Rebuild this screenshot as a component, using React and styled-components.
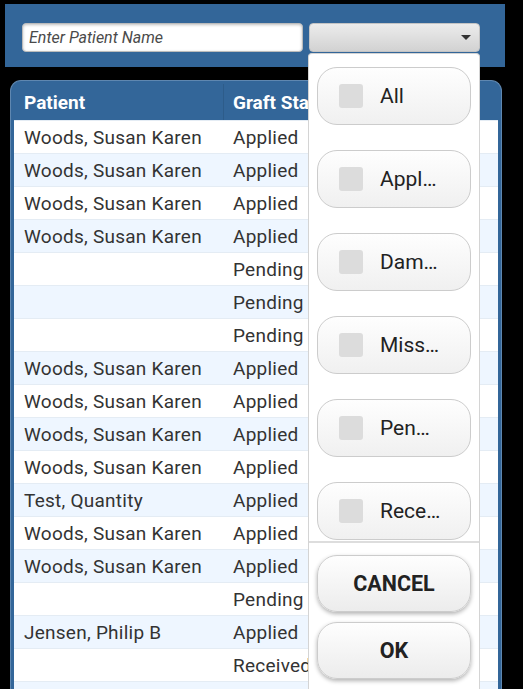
import React from 'react'
import styled, { createGlobalStyle } from 'styled-components'

const Global = createGlobalStyle`
  html, body { margin:0; padding:0; background:#000; }
  body { font-family: Roboto, "Noto Sans", sans-serif; overflow:hidden; height:689px; }
`

const Page = styled.div`position:relative; height:689px; overflow:hidden;`
const TopBar = styled.div`
  margin:4px 18px 0 5px; height:63px; background:#336699;
  display:flex; align-items:flex-start; gap:6px; padding:19px 0 0 17px; box-sizing:border-box;
`
const SearchInput = styled.input`
  width:281px; height:29px; box-sizing:border-box; border:1px solid #bbb; border-radius:4px;
  background:#fff; padding:0 6px; font-family:Roboto, sans-serif; font-size:16px; font-style:italic;
  box-shadow: inset 0 1px 3px rgba(0,0,0,0.25);
  &::placeholder { color:#4a4a4a; }
`
const Select = styled.div`
  width:171px; height:29px; box-sizing:border-box; border:1px solid #c4c4c4; border-radius:4px;
  background:linear-gradient(#ececec, #d2d2d2); display:flex; align-items:center; justify-content:flex-end;
  padding-right:8px;
`
const Arrow = styled.span`
  width:0; height:0; border-left:5px solid transparent; border-right:5px solid transparent;
  border-top:5px solid #333;
`
const TableWrap = styled.div`
  margin:13px 21px 0 10px; background:#336699; border-radius:11px 11px 0 0;
  padding:3px 3px 0 3px; border:1px solid #5f87b0; border-bottom:none;
`
const HeadRow = styled.div`display:grid; grid-template-columns:210px 110px 1fr; height:36px;`
const HeadCell = styled.div`
  color:#fff; font-weight:bold; font-size:19px; display:flex; align-items:center;
  padding-left:${p => p.$pad}px; border-right:${p => (p.$line ? '1px solid #2d5c8a' : 'none')};
  white-space:nowrap;
`
const Row = styled.div`
  display:grid; grid-template-columns:210px 110px 1fr; height:33px;
  background:${p => (p.$alt ? '#eef6ff' : '#fff')}; border-top:1px solid #e4ecf4; box-sizing:border-box;
`
const Cell = styled.div`
  color:#333; font-size:19px; letter-spacing:0.25px; display:flex; align-items:center;
  padding-left:${p => p.$pad}px; white-space:nowrap;
`
const Panel = styled.div`
  position:absolute; left:308px; top:53px; width:172px; bottom:0; box-sizing:border-box;
  background:#fff; border:1px solid #d4d4d4; border-bottom:none; border-radius:4px 4px 0 0;
  display:flex; flex-direction:column;
`
const Options = styled.div`display:flex; flex-direction:column; gap:25px; padding:13px 8px 1px 8px;`
const OptionBtn = styled.div`
  height:58px; box-sizing:border-box; border:1px solid #ccc; border-radius:20px;
  background:linear-gradient(#fefefe, #f0f0f0); display:flex; align-items:center; padding-left:21px; gap:17px;
`
const Box = styled.span`width:24px; height:24px; border-radius:3px; background:#dcdcdc;`
const OptLabel = styled.span`font-size:21px; color:#222;`
const Divider = styled.div`height:2px; background:#ddd;`
const Actions = styled.div`display:flex; flex-direction:column; gap:10px; padding:12px 8px 0 8px;`
const ActionBtn = styled.div`
  height:57px; box-sizing:border-box; border:1px solid #ccc; border-radius:20px;
  background:linear-gradient(#fefefe, #ececec); box-shadow:0 2px 4px rgba(0,0,0,0.3);
  display:flex; align-items:center; justify-content:center;
  font-size:21.5px; font-weight:bold; color:#222;
`

const W = 'Woods, Susan Karen'
const rows = [
  [W, 'Applied'], [W, 'Applied'], [W, 'Applied'], [W, 'Applied'],
  ['', 'Pending'], ['', 'Pending'], ['', 'Pending'],
  [W, 'Applied'], [W, 'Applied'], [W, 'Applied'], [W, 'Applied'],
  ['Test, Quantity', 'Applied'], [W, 'Applied'], [W, 'Applied'],
  ['', 'Pending'], ['Jensen, Philip B', 'Applied'], ['', 'Received'], ['', ''],
]
const options = ['All', 'Appl…', 'Dam…', 'Miss…', 'Pen…', 'Rece…']

export default function App() {
  return (
    <Page>
      <Global />
      <TopBar>
        <SearchInput placeholder="Enter Patient Name" />
        <Select><Arrow /></Select>
      </TopBar>
      <TableWrap>
        <HeadRow>
          <HeadCell $pad={10} $line>Patient</HeadCell>
          <HeadCell $pad={9}>Graft Status</HeadCell>
          <HeadCell $pad={10}></HeadCell>
        </HeadRow>
        {rows.map((r, i) => (
          <Row key={i} $alt={i % 2 === 1}>
            <Cell $pad={10}>{r[0]}</Cell>
            <Cell $pad={9}>{r[1]}</Cell>
            <Cell $pad={10}></Cell>
          </Row>
        ))}
      </TableWrap>
      <Panel>
        <Options>
          {options.map(o => (
            <OptionBtn key={o}><Box /><OptLabel>{o}</OptLabel></OptionBtn>
          ))}
        </Options>
        <Divider />
        <Actions>
          <ActionBtn>CANCEL</ActionBtn>
          <ActionBtn>OK</ActionBtn>
        </Actions>
      </Panel>
    </Page>
  )
}
